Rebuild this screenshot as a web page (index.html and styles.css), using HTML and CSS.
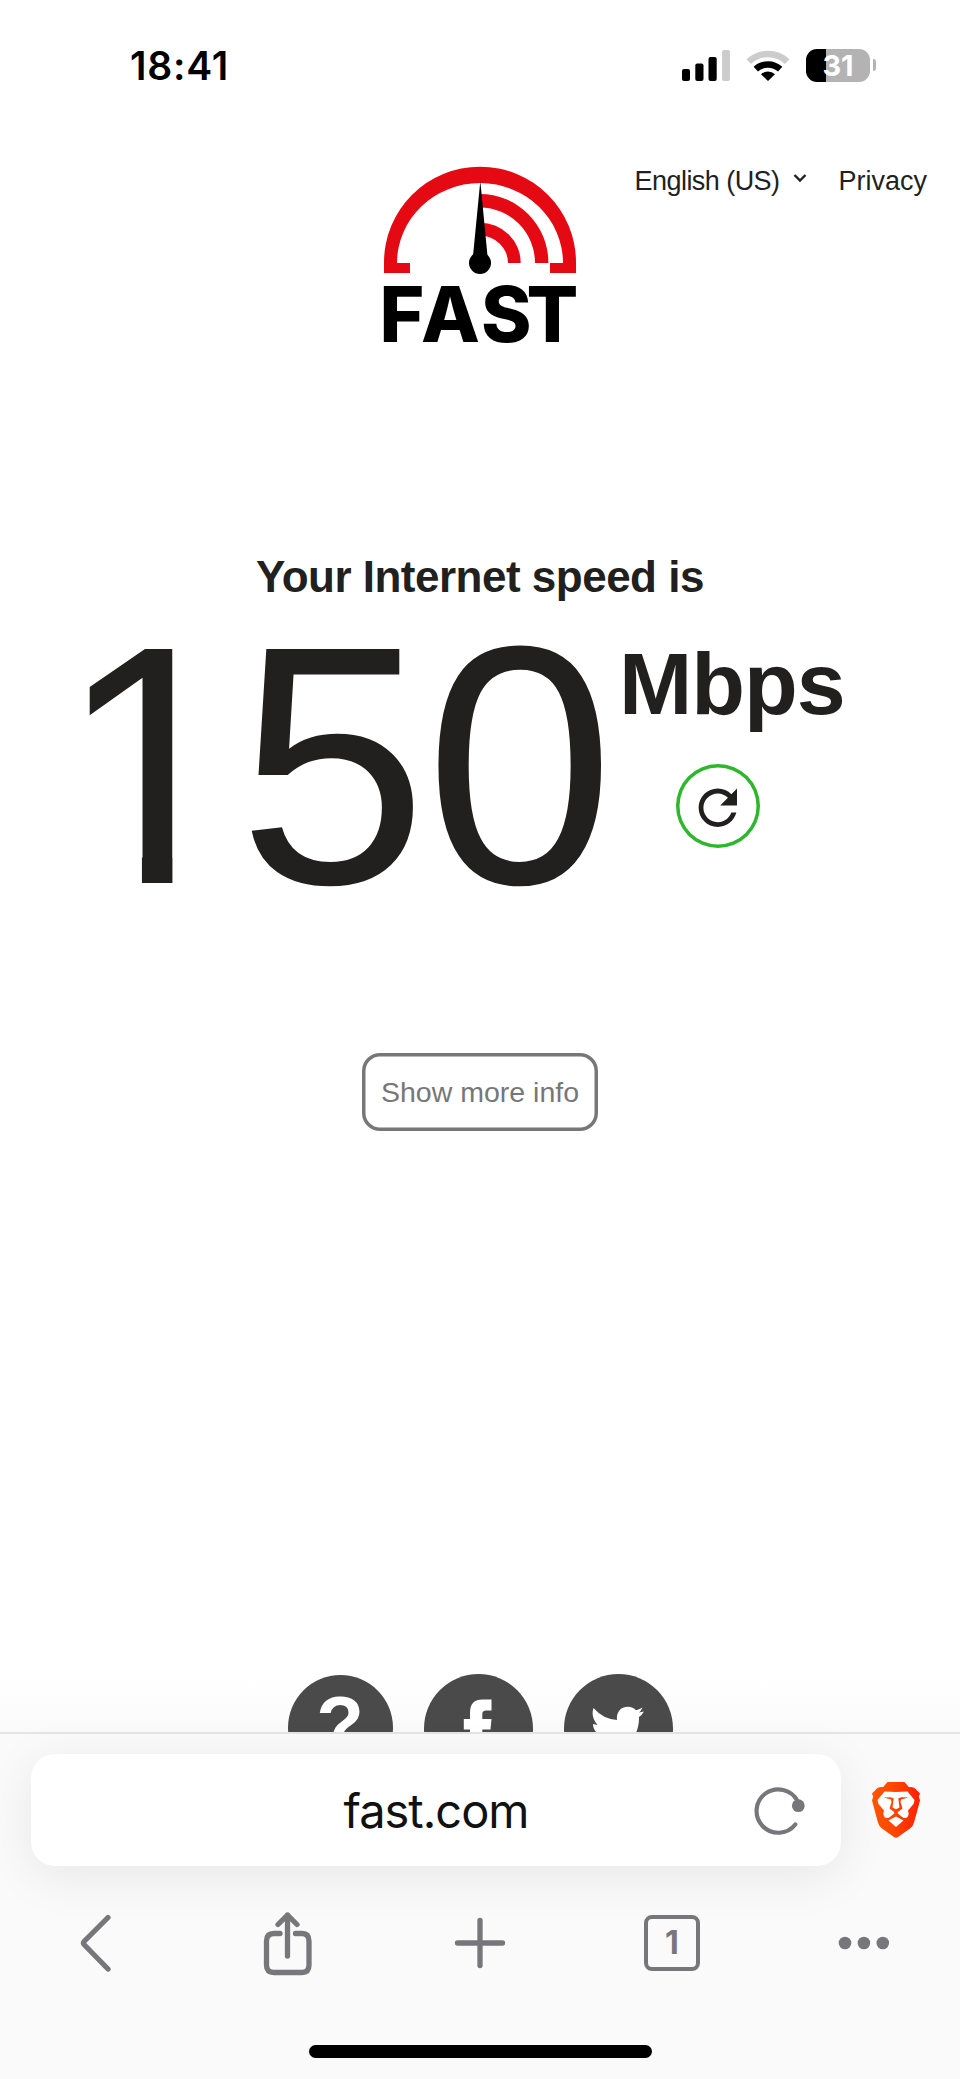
FILE: index.html
```
<!DOCTYPE html>
<html lang="en">
<head>
    <meta charset="UTF-8">
    <meta name="viewport" content="width=device-width, initial-scale=1.0">
    <title>Internet Speed Test | Fast.com</title>
    <link rel="stylesheet" href="styles.css">
</head>
<body>

    <div class="page">
        <div class="status-bar">
            <span class="clock">18:41</span>
            <div class="status-icons">
                <svg class="signal" width="48" height="31" viewBox="0 0 48 31">
                    <rect x="0" y="19" width="8" height="12" rx="2"/>
                    <rect x="13.3" y="13.5" width="8.2" height="17.5" rx="2"/>
                    <rect x="26.5" y="7" width="8.2" height="24" rx="2"/>
                    <rect x="40" y="0" width="8" height="31" rx="2" fill="#ccc"/>
                </svg>
                <svg class="wifi" width="44" height="31" viewBox="0 0 44 31">
                    <path d="M2.8 11.6A28 28 0 0 1 41.2 11.6" fill="none" stroke="#ccc" stroke-width="6.4"/>
                    <path d="M9.8 19.2A18 18 0 0 1 34.2 19.2" fill="none" stroke="#000" stroke-width="6.4"/>
                    <path d="M22 31L15 24.3A10 10 0 0 1 29 24.3Z"/>
                </svg>
                <div class="battery"><span>31</span></div>
                <div class="battery-cap"></div>
            </div>
        </div>

        <header class="header">
            <svg class="logo" width="194" height="180" viewBox="383 166 194 180">
                <path fill="#e50914" d="M384 273V262.5A96 95.8 0 0 1 576 262.5V273H550V263H563A83 80 0 0 0 397 263H410V273Z"/>
                <path fill="#e50914" d="M480 194A68.4 69 0 0 1 548.4 263H535A55 55.5 0 0 0 480 207.5Z"/>
                <path fill="#e50914" d="M480 222.7A40.7 40.3 0 0 1 520.7 263H508A28 27.4 0 0 0 480 235.6Z"/>
                <path d="M480.3 181L487.5 256H473Z"/>
                <circle cx="480" cy="263" r="11"/>
                <text class="logo-text" y="342" x="379.5 421 481 526.5">FAST</text>
            </svg>
            <nav class="nav">
                <a class="lang">English (US)
                    <svg width="14" height="10" viewBox="0 0 14 10"><path d="M1.5 2L7 7.5L12.5 2" fill="none" stroke="#221f1f" stroke-width="2.4"/></svg>
                </a>
                <a>Privacy</a>
            </nav>
        </header>

        <main class="speed">
            <h1>Your Internet speed is</h1>
            <div class="speed-row">
                <div class="speed-value"><span class="digit-one">1</span>50</div>
                <div class="speed-side">
                    <span class="units">Mbps</span>
                    <button class="retry" aria-label="Retry">
                        <svg width="57.6" height="57.6" viewBox="0 0 24 24"><path fill="#221f1f" d="M17.65 6.35C16.2 4.9 14.21 4 12 4c-4.42 0-7.99 3.58-7.99 8s3.57 8 7.99 8c3.73 0 6.84-2.55 7.73-6h-2.08c-.82 2.33-3.04 4-5.65 4-3.31 0-6-2.69-6-6s2.69-6 6-6c1.66 0 3.14.69 4.22 1.78L13 11h7V4l-2.35 2.35z"/></svg>
                    </button>
                </div>
            </div>
            <button class="more-info">Show more info</button>
        </main>

        <footer class="social">
            <a class="help">?</a>
            <a>
                <svg width="109" height="109" viewBox="0 0 109 109"><path fill="#fff" d="M46 80V55.5H39.8V45H46V38.5Q46 25.5 58.5 25.5H67.5V36.5H62Q58.3 36.5 58.3 40V45H67.5L66.5 55.5H58.3V80Z"/></svg>
            </a>
            <a>
                <svg width="109" height="109" viewBox="0 0 109 109"><path fill="#fff" d="M29.5 34Q39 45 53 46C52 37 58 32.5 64 32.7Q69 33 72 36.2Q75 35.5 78.5 33.5Q77 37 75 38.5L80 37.5Q78 41 75 43C75.5 66 58 77 44 77Q35 77 28.5 73Q37 73.5 43 69Q35 68 33 61.5H37.5Q29 58 29 50L33.5 51Q26.5 43 29.5 34Z"/></svg>
            </a>
        </footer>
    </div>

    <div class="browser-bar">
        <div class="address-row">
            <div class="address">
                <span class="url">fast.com</span>
                <svg class="reload" width="52" height="52" viewBox="0 0 52 52">
                    <path d="M41.3 40.5A21.7 21.7 0 1 1 43.5 17" fill="none" stroke="#77777b" stroke-width="4.2" stroke-linecap="round"/>
                    <circle cx="44.3" cy="21.7" r="6.4" fill="#77777b"/>
                </svg>
            </div>
            <svg class="brave" width="48" height="56" viewBox="0 0 48 56">
                <defs>
                    <linearGradient id="brave-fill"><stop offset="0" stop-color="#ff5500"/><stop offset=".42" stop-color="#ff4800"/><stop offset="1" stop-color="#ff2000"/></linearGradient>
                </defs>
                <path fill="url(#brave-fill)" d="M15.5 0H32.5L37 5.2Q42 4.5 45 8.5L48 11.5L46.8 14.5L48 18.5L42.2 40Q41.3 44 38 46.5L26 55Q24 56.5 22 55L10 46.5Q6.7 44 5.8 40L0 18.5L1.2 14.5L0 11.5L3 8.5Q6 4.5 11 5.2Z"/>
                <path fill="#fff" d="M24 10L35.5 9.5L42.5 18L41.5 22L36 28.5Q37.5 33 35 35.5Q32 37 29.5 34.5L25.8 31.5V30L30.5 26.5L28.5 20L29 17.5L36.5 15.5L29.5 15.2L26.3 16.3L27.5 25.5L24 27.2L20.5 25.5L21.7 16.3L18.5 15.2L11.5 15.5L19 17.5L19.5 20L17.5 26.5L22.2 30V31.5L18.5 34.5Q16 37 13 35.5Q10.5 33 12 28.5L6.5 22L5.5 18L12.5 9.5Z"/>
                <path fill="#fff" d="M24 34.5L31.5 38.5L24 45L16.5 38.5Z"/>
            </svg>
        </div>
        <div class="toolbar">
            <svg width="60" height="70" viewBox="0 0 60 70"><path d="M42 9.5L18.5 33Q16.5 35 18.5 37L42 61"/></svg>
            <svg width="60" height="70" viewBox="0 0 60 70"><path d="M22 25.5H16Q8.5 25.5 8.5 33V57Q8.5 64.5 16 64.5H44Q51 64.5 51 57V33Q51 25.5 44 25.5H37.5M29.5 48V7M20 16.5L29.5 7L39 16.5"/></svg>
            <svg width="60" height="70" viewBox="0 0 60 70"><path d="M7.5 35H52.5M30 12.5V57.5"/></svg>
            <div class="tabs">1</div>
            <svg width="60" height="70" viewBox="0 0 60 70"><g fill="#77777b"><circle cx="11" cy="35" r="6.3"/><circle cx="29.9" cy="35" r="6.3"/><circle cx="48.8" cy="35" r="6.3"/></g></svg>
        </div>
        <div class="home-indicator"></div>
    </div>

</body>
</html>
```
FILE: styles.css
```
* {
    box-sizing: border-box;
}
body {
    font-family: "Liberation Sans", Arial, sans-serif;
    background-color: #fff;
    color: #221f1f;
    margin: 0;
    height: 2079px;
    display: flex;
    flex-direction: column;
    overflow: hidden;
}
button {
    font-family: inherit;
    background: none;
    border: none;
    padding: 0;
}
.page {
    height: 1732px;
    overflow: hidden;
    background: linear-gradient(#fff 1680px, #fafafa);
}
.status-bar {
    height: 130px;
    padding: 0 84px 0 130px;
    display: flex;
    justify-content: space-between;
}
.clock {
    font-family: Inter, sans-serif;
    font-size: 39px;
    font-weight: 600;
    line-height: 48px;
    letter-spacing: 0.8px;
    margin-top: 42px;
    color: #000;
}
.status-icons {
    display: flex;
    height: 34px;
    margin-top: 48px;
    align-items: center;
}
.wifi {
    margin: 0 16px;
}
.battery {
    width: 64px;
    height: 33px;
    border-radius: 11px;
    background: linear-gradient(90deg, #000 20px, #b3b3b3 20px);
    color: #fff;
    font-family: Inter, sans-serif;
    font-size: 29px;
    font-weight: 700;
    line-height: 33px;
    text-align: center;
}
.battery-cap {
    width: 3px;
    height: 12px;
    margin-left: 3px;
    border-radius: 0 4px 4px 0;
    background-color: #b3b3b3;
}
.header {
    height: 410px;
    padding: 36px 33px 0 383px;
    display: flex;
    justify-content: space-between;
    align-items: flex-start;
}
.logo {
    overflow: visible;
}
.logo-text {
    font-family: Inter, sans-serif;
    font-size: 76.6px;
    font-weight: 800;
    fill: #000;
}
.nav {
    display: flex;
    gap: 31px;
    font-size: 27px;
    line-height: 30px;
    white-space: nowrap;
}
.lang {
    letter-spacing: -0.55px;
}
.lang svg {
    margin-left: 7px;
    vertical-align: 7px;
}
.speed {
    height: 1134px;
    display: flex;
    flex-direction: column;
    align-items: center;
}
h1 {
    font-size: 44px;
    line-height: 50px;
    letter-spacing: -0.5px;
    margin: 12px 0 0;
}
.speed-row {
    width: 100%;
    height: 451px;
    padding-left: 57px;
    display: flex;
}
.speed-value {
    width: 562px;
    font-size: 340px;
    line-height: 380px;
    letter-spacing: -2px;
    white-space: nowrap;
    margin-top: -27px;
}
/* keeps the flag and the stem of the one, drops its foot */
.digit-one {
    display: inline-block;
    margin-right: -6px;
    clip-path: polygon(0 0, 61.7% 0, 61.7% 100%, 45.4% 100%, 45.4% 60%, 0 60%);
}
.speed-side {
    width: 228px;
    display: flex;
    flex-direction: column;
    align-items: flex-start;
}
.units {
    font-size: 88px;
    font-weight: bold;
    line-height: 100px;
    letter-spacing: -1px;
    margin-top: 32px;
}
.retry {
    width: 84px;
    height: 84px;
    margin: 30px 0 0 57px;
    box-shadow: inset 0 0 0 3.5px #2fb62f;
    border-radius: 50%;
    display: flex;
    align-items: center;
    justify-content: center;
}
.retry svg {
    margin-top: 4px;
}
.more-info {
    width: 236px;
    height: 78px;
    box-shadow: inset 0 0 0 3.5px #777;
    border-radius: 18px;
    color: #777;
    font-size: 28.5px;
}
.social {
    display: flex;
    justify-content: center;
    align-items: flex-start;
    gap: 31px;
}
.social a {
    width: 109px;
    height: 109px;
    border-radius: 50%;
    background-color: #4a4a4a;
}
.social .help {
    width: 105px;
    height: 105px;
    margin-top: 1px;
    color: #fff;
    font-size: 78px;
    font-weight: bold;
    line-height: 99px;
    text-align: center;
}
.browser-bar {
    height: 347px;
    border-top: 2px solid #e4e4e5;
    background-color: #fafafa;
    display: flex;
    flex-direction: column;
    align-items: center;
}
.address-row {
    width: 100%;
    padding: 20px 40px 0 31px;
    display: flex;
    justify-content: space-between;
    align-items: center;
}
.address {
    width: 810px;
    height: 112px;
    border-radius: 24px;
    background-color: #fff;
    box-shadow: 0 10px 50px rgba(0, 0, 0, 0.08);
    display: grid;
    grid-template-columns: 1fr auto 1fr;
    align-items: center;
}
.url {
    grid-column: 2;
    font-family: Inter, sans-serif;
    font-size: 47px;
    letter-spacing: -1px;
    color: #111;
}
.reload {
    justify-self: end;
    margin-right: 35px;
}
.toolbar {
    width: 100%;
    margin-top: 42px;
    display: grid;
    grid-template-columns: repeat(5, 1fr);
    justify-items: center;
    align-items: center;
}
.toolbar svg {
    fill: none;
    stroke: #77777b;
    stroke-width: 5.3;
    stroke-linecap: round;
    stroke-linejoin: round;
}
.toolbar g {
    stroke: none;
}
.tabs {
    width: 56px;
    height: 56px;
    border: 4px solid #77777b;
    border-radius: 8px;
    color: #77777b;
    font-family: Inter, sans-serif;
    font-size: 32px;
    font-weight: 700;
    line-height: 48px;
    text-align: center;
}
.home-indicator {
    width: 343px;
    height: 13px;
    margin-top: 67px;
    border-radius: 7px;
    background-color: #000;
}
```
